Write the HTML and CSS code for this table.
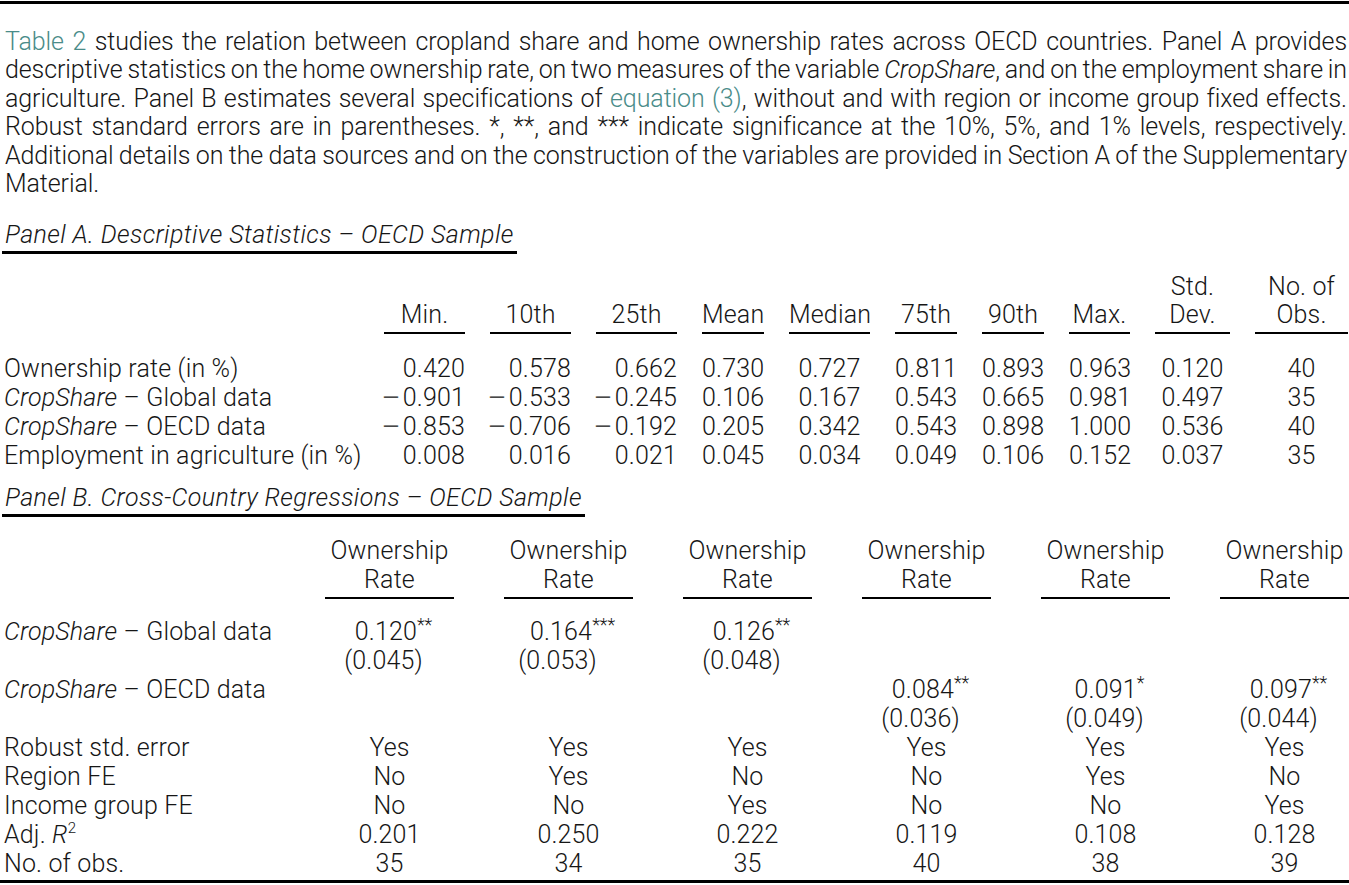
FILE: index.html
```
<!DOCTYPE html>
<html lang="en">
<head>
    <meta charset="UTF-8">
    <meta name="viewport" content="width=device-width, initial-scale=1.0">
    <title>Table 2 - Cropland share and home ownership</title>
    <link rel="stylesheet" href="styles.css">
</head>
<body>
    <div class="rule"></div>

    <div class="intro">
        <div class="line"><span class="ref">Table 2</span> studies the relation between cropland share and home ownership rates across OECD countries. Panel A provides</div>
        <div class="line">descriptive statistics on the home ownership rate, on two measures of the variable <i>CropShare</i>, and on the employment share in</div>
        <div class="line">agriculture. Panel B estimates several specifications of <span class="ref">equation (3)</span>, without and with region or income group fixed effects.</div>
        <div class="line">Robust standard errors are in parentheses. *, **, and *** indicate significance at the 10%, 5%, and 1% levels, respectively.</div>
        <div class="line">Additional details on the data sources and on the construction of the variables are provided in Section A of the Supplementary</div>
        <div class="line last">Material.</div>
    </div>

    <!-- Panel A -->
    <div class="panel-head panel-a"><span class="title">Panel A. Descriptive Statistics – OECD Sample</span></div>
    <div class="stats">
        <div class="hd blank"></div>
        <div class="hd">Min.</div>
        <div class="hd">10th</div>
        <div class="hd">25th</div>
        <div class="hd">Mean</div>
        <div class="hd">Median</div>
        <div class="hd">75th</div>
        <div class="hd">90th</div>
        <div class="hd">Max.</div>
        <div class="hd">Std.<br>Dev.</div>
        <div class="hd">No. of<br>Obs.</div>

        <div class="lbl">Ownership rate (in %)</div>
        <div class="num">0.420</div><div class="num">0.578</div><div class="num">0.662</div>
        <div>0.730</div><div>0.727</div><div>0.811</div><div>0.893</div><div>0.963</div><div>0.120</div><div>40</div>

        <div class="lbl"><i>CropShare</i> – Global data</div>
        <div class="num"><span class="neg">−</span>0.901</div><div class="num"><span class="neg">−</span>0.533</div><div class="num"><span class="neg">−</span>0.245</div>
        <div>0.106</div><div>0.167</div><div>0.543</div><div>0.665</div><div>0.981</div><div>0.497</div><div>35</div>

        <div class="lbl"><i>CropShare</i> – OECD data</div>
        <div class="num"><span class="neg">−</span>0.853</div><div class="num"><span class="neg">−</span>0.706</div><div class="num"><span class="neg">−</span>0.192</div>
        <div>0.205</div><div>0.342</div><div>0.543</div><div>0.898</div><div>1.000</div><div>0.536</div><div>40</div>

        <div class="lbl">Employment in agriculture (in %)</div>
        <div class="num">0.008</div><div class="num">0.016</div><div class="num">0.021</div>
        <div>0.045</div><div>0.034</div><div>0.049</div><div>0.106</div><div>0.152</div><div>0.037</div><div>35</div>
    </div>

    <!-- Panel B -->
    <div class="panel-head panel-b"><span class="title">Panel B. Cross-Country Regressions – OECD Sample</span></div>
    <div class="regs">
        <div class="hd blank"></div>
        <div class="hd">Ownership<br>Rate</div>
        <div class="hd">Ownership<br>Rate</div>
        <div class="hd">Ownership<br>Rate</div>
        <div class="hd">Ownership<br>Rate</div>
        <div class="hd">Ownership<br>Rate</div>
        <div class="hd">Ownership<br>Rate</div>

        <div class="lbl"><i>CropShare</i> – Global data</div>
        <div class="coef">0.120<sup>**</sup></div>
        <div class="coef">0.164<sup>***</sup></div>
        <div class="coef">0.126<sup>**</sup></div>
        <div></div><div></div><div></div>

        <div class="lbl"></div>
        <div class="se s2">(0.045)</div>
        <div class="se s3">(0.053)</div>
        <div class="se s2">(0.048)</div>
        <div></div><div></div><div></div>

        <div class="lbl"><i>CropShare</i> – OECD data</div>
        <div></div><div></div><div></div>
        <div class="coef">0.084<sup>**</sup></div>
        <div class="coef">0.091<sup>*</sup></div>
        <div class="coef">0.097<sup>**</sup></div>

        <div class="lbl"></div>
        <div></div><div></div><div></div>
        <div class="se s2">(0.036)</div>
        <div class="se s1">(0.049)</div>
        <div class="se s2">(0.044)</div>

        <div class="lbl">Robust std. error</div>
        <div>Yes</div><div>Yes</div><div>Yes</div><div>Yes</div><div>Yes</div><div>Yes</div>

        <div class="lbl">Region FE</div>
        <div>No</div><div>Yes</div><div>No</div><div>No</div><div>Yes</div><div>No</div>

        <div class="lbl">Income group FE</div>
        <div>No</div><div>No</div><div>Yes</div><div>No</div><div>No</div><div>Yes</div>

        <div class="lbl">Adj. <i>R</i><sup class="sq">2</sup></div>
        <div>0.201</div><div>0.250</div><div>0.222</div><div>0.119</div><div>0.108</div><div>0.128</div>

        <div class="lbl">No. of obs.</div>
        <div>35</div><div>34</div><div>35</div><div>40</div><div>38</div><div>39</div>
    </div>
    <div class="rule bottom"></div>
</body>
</html>
```

FILE: styles.css
```
* {
  margin: 0;
  padding: 0;
  box-sizing: border-box;
}

body {
  font-family: Roboto, "Liberation Sans", sans-serif;
  font-weight: 300;
  font-size: 25px;
  line-height: 28px;
  color: #161616;
  background-color: #fff;
}

/* Heavy rules at top and bottom */
.rule {
  height: 3px;
  background-color: #000;
  margin-top: 1px;
}

.rule.bottom {
  margin-top: 2px;
}

/* Caption paragraph, one justified block per line */
.intro {
  margin-top: 24px;
  padding: 0 2px 0 5px;
  line-height: 28.4px;
  letter-spacing: -0.1px;
  word-spacing: -3px;
}

.intro .line {
  text-align: justify;
  text-align-last: justify;
  white-space: nowrap;
}

.intro .line.last {
  text-align-last: left;
}

.ref {
  color: #4a8c89;
}

/* Panel headings */
.panel-head {
  line-height: 28px;
  font-style: italic;
  letter-spacing: 0.4px;
}

.panel-head .title {
  padding: 0 3px 2px 3px;
  margin-left: 2px;
  border-bottom: 3px solid #000;
}

.panel-a {
  margin-top: 23px;
}

.panel-b {
  margin-top: 14px;
}

/* Panel A grid */
.stats {
  display: grid;
  grid-template-columns: 355px 81px 81px 81px 62px 81px 62px 62px 61px 75px 93px;
  column-gap: 25px;
  margin-top: 24px;
  padding-left: 4px;
  line-height: 29px;
  letter-spacing: 0.15px;
  text-align: center;
}

.hd {
  align-self: end;
  text-align: center;
  line-height: 28px;
  padding-bottom: 3px;
  border-bottom: 2px solid #000;
  margin-bottom: 20px;
  white-space: nowrap;
}

.hd.blank {
  border-bottom: 0;
}

.lbl {
  text-align: left;
  white-space: nowrap;
}

.num {
  justify-self: end;
  white-space: nowrap;
}

.neg {
  display: inline-block;
  transform: scaleX(1.4);
  margin: 0 4px 0 3px;
}

/* Panel B grid */
.regs {
  display: grid;
  grid-template-columns: 271px repeat(6, 129px);
  column-gap: 50px;
  margin-top: 24px;
  padding-left: 4px;
  line-height: 29px;
  letter-spacing: 0.15px;
  text-align: center;
}

.regs .hd {
  line-height: 29px;
  margin-bottom: 18px;
}

.coef {
  padding-left: 8px;
  white-space: nowrap;
}

.coef sup {
  font-size: 18px;
  line-height: 0;
  vertical-align: 9px;
  letter-spacing: 0;
}

.se.s1 {
  padding-right: 2px;
}

.se.s2 {
  padding-right: 12px;
}

.se.s3 {
  padding-right: 22px;
}

.sq {
  font-size: 15px;
  line-height: 0;
  vertical-align: 10px;
}
```
